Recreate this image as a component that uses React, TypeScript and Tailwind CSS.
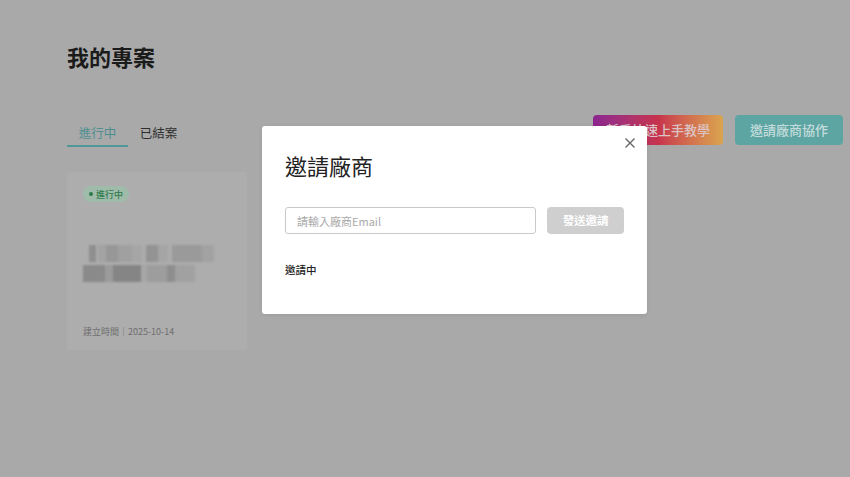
import React from "react";

// pixelated placeholder for the project name (grays per block)
const nameRow1 = [
  { w: 7, c: "#8f8f8f", ml: 6 },
  { w: 8, c: "#a3a3a3", ml: 2 },
  { w: 12, c: "#979797", ml: 0 },
  { w: 14, c: "#a0a0a0", ml: 0 },
  { w: 10, c: "#a6a6a6", ml: 0 },
  { w: 12, c: "#939393", ml: 4 },
  { w: 10, c: "#a5a5a5", ml: 0 },
  { w: 30, c: "#9a9a9a", ml: 4 },
  { w: 12, c: "#a2a2a2", ml: 0 },
];

const nameRow2 = [
  { w: 22, c: "#8a8a8a", ml: 0 },
  { w: 8, c: "#9b9b9b", ml: 0 },
  { w: 28, c: "#858585", ml: 0 },
  { w: 6, c: "#a7a7a7", ml: 0 },
  { w: 20, c: "#9d9d9d", ml: 0 },
  { w: 8, c: "#8e8e8e", ml: 0 },
  { w: 20, c: "#a1a1a1", ml: 0 },
];

const ProjectCard = () => {
  return (
    <div className="flex h-[178px] w-[180px] flex-col rounded-[3px] bg-[#adadad] px-[16px] pb-[12px] pt-[14px]">
      <div className="flex h-[16px] w-fit items-center gap-[3px] rounded-full bg-[#9fbcab] px-[6px]">
        <span className="h-[4px] w-[4px] rounded-full bg-[#2f7a4b]" />
        <span className="text-[9px] leading-none font-medium text-[#2f7a4b]">進行中</span>
      </div>
      <div className="mt-[43px] flex flex-col gap-[3px] blur-[1px]">
        <div className="flex h-[17px]">
          {nameRow1.map((b, i) => (
            <div key={i} className="h-full" style={{ width: b.w, marginLeft: b.ml, background: b.c }} />
          ))}
        </div>
        <div className="flex h-[17px]">
          {nameRow2.map((b, i) => (
            <div key={i} className="h-full" style={{ width: b.w, marginLeft: b.ml, background: b.c }} />
          ))}
        </div>
      </div>
      <div className="mt-auto text-[9px] leading-[12px] text-[#6d6d6d]">建立時間｜2025-10-14</div>
    </div>
  );
};

const InviteModal = () => {
  return (
    <div className="absolute left-[262px] top-[126px] h-[188px] w-[385px] rounded-[3px] bg-white px-[23px] pt-[24px] shadow-[0_1px_4px_rgba(0,0,0,0.08)]">
      <button className="absolute right-[10px] top-[10px] flex h-[14px] w-[14px] items-center justify-center text-[#666]">
        <svg viewBox="0 0 14 14" className="h-[14px] w-[14px]" fill="none" stroke="currentColor" strokeWidth="1.4">
          <path d="M2.5 2.5l9 9M11.5 2.5l-9 9" />
        </svg>
      </button>
      <h2 className="text-[22px] leading-[30px] font-normal text-[#222]">邀請廠商</h2>
      <div className="mt-[27px] flex items-center gap-[11px]">
        <input
          placeholder="請輸入廠商Email"
          className="h-[27px] w-[252px] rounded-[3px] border border-[#c9c9c9] px-[11px] text-[11px] text-[#333] outline-none placeholder:text-[#a9a9a9]"
        />
        <button className="h-[27px] w-[77px] rounded-[4px] bg-[#cfcfcf] text-[11.5px] font-bold text-white">
          發送邀請
        </button>
      </div>
      <div className="mt-[28px] text-[10.5px] leading-[16px] font-medium text-[#222]">邀請中</div>
    </div>
  );
};

export default function App() {
  return (
    <div className="relative h-[477px] w-[850px] overflow-hidden bg-[#a9a9a9] font-['Noto_Sans_CJK_TC',sans-serif]">
      <div className="pl-[67px] pr-[7px] pt-[41px]">
        <h1 className="text-[22px] leading-[30px] font-bold text-[#1b1b1b]">我的專案</h1>

        <div className="mt-[44px] flex items-start justify-between">
          <div className="flex">
            <div className="w-[61px] border-b-[2px] border-[#4f9799] pb-[3px] pt-[9px] text-center text-[12.5px] leading-[18px] text-[#4f8f92]">
              進行中
            </div>
            <div className="w-[61px] pb-[3px] pt-[9px] text-center text-[12.5px] leading-[18px] text-[#2e2e2e]">
              已結案
            </div>
          </div>
          <div className="flex gap-[12px]">
            <button className="h-[30px] w-[130px] rounded-[4px] bg-gradient-to-r from-[#8c2490] via-[#c7324c] to-[#d9a44e] text-[13px] font-medium text-[#dcc4c6]">
              新手快速上手教學
            </button>
            <button className="h-[30px] w-[108px] rounded-[4px] bg-[#5ca5a3] text-[13px] font-medium text-[#c3dcdb]">
              邀請廠商協作
            </button>
          </div>
        </div>

        <div className="mt-[25px]">
          <ProjectCard />
        </div>
      </div>

      <InviteModal />
    </div>
  );
}
